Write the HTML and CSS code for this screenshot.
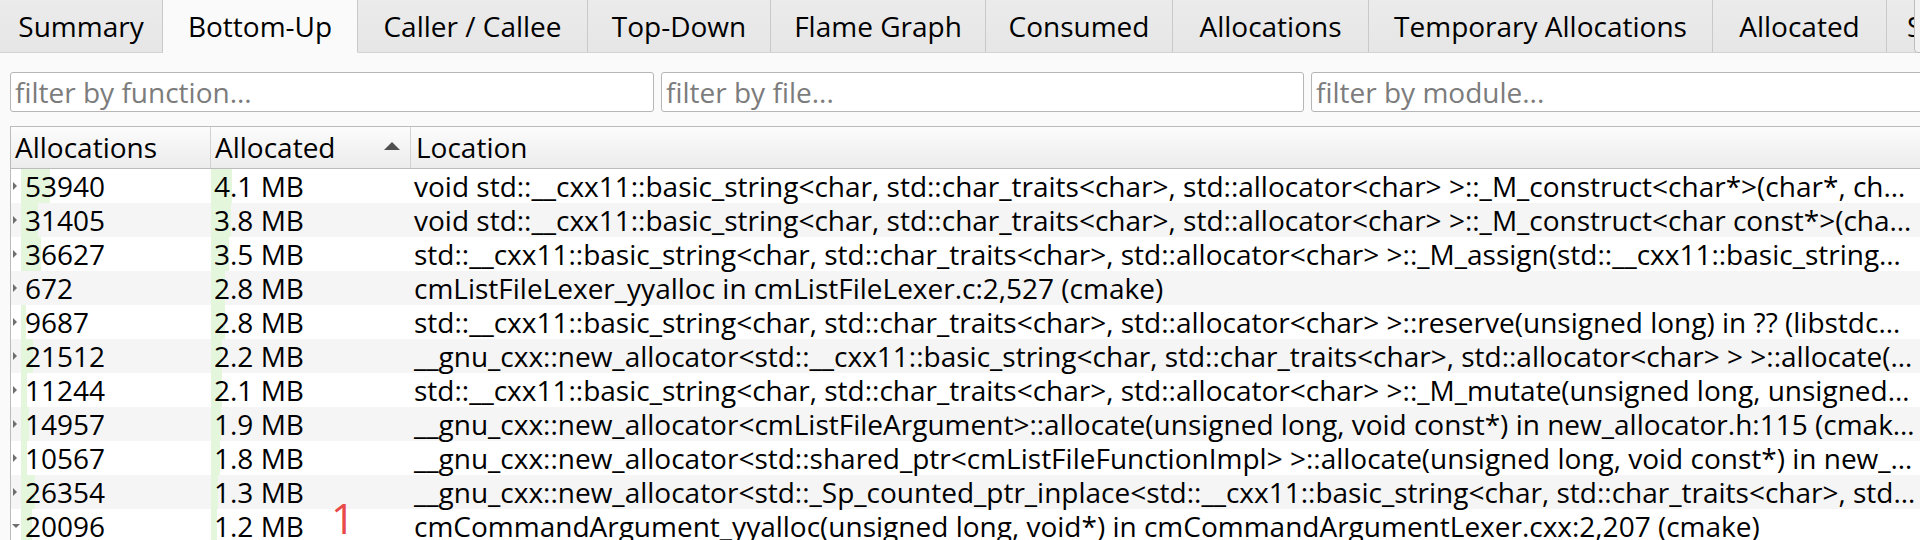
FILE: index.html
```html
<!DOCTYPE html>
<html lang="en">
<head>
<meta charset="utf-8">
<title>Heaptrack - Bottom-Up</title>
<link rel="stylesheet" href="styles.css">
</head>
<body>
<div class="tabbar">
  <div class="tab">Summary</div>
  <div class="tab active">Bottom-Up</div>
  <div class="tab">Caller / Callee</div>
  <div class="tab">Top-Down</div>
  <div class="tab">Flame Graph</div>
  <div class="tab">Consumed</div>
  <div class="tab">Allocations</div>
  <div class="tab">Temporary Allocations</div>
  <div class="tab">Allocated</div>
  <div class="tab">Sizes</div>
  <div class="tab-scroll"></div>
</div>

<div class="filters">
  <input class="filter" type="text" placeholder="filter by function...">
  <input class="filter" type="text" placeholder="filter by file...">
  <input class="filter" type="text" placeholder="filter by module...">
</div>

<div class="tree">
  <div class="header">
    <div class="hcell">Allocations</div>
    <div class="hcell sorted"><span>Allocated</span><span class="sort-up"></span></div>
    <div class="hcell last">Location</div>
  </div>

  <div class="row">
    <div class="branch"><span class="arrow"></span></div>
    <div class="cell bar" style="--w:29px">53940</div>
    <div class="cell bar" style="--w:21px">4.1 MB</div>
    <div class="cell loc">void std::__cxx11::basic_string&lt;char, std::char_traits&lt;char&gt;, std::allocator&lt;char&gt; &gt;::_M_construct&lt;char*&gt;(char*, char*, std::forward_iterator_tag) in basic_string.tcc:225 (cmake)</div>
  </div>
  <div class="row">
    <div class="branch"><span class="arrow"></span></div>
    <div class="cell bar" style="--w:17px">31405</div>
    <div class="cell bar" style="--w:20px">3.8 MB</div>
    <div class="cell loc">void std::__cxx11::basic_string&lt;char, std::char_traits&lt;char&gt;, std::allocator&lt;char&gt; &gt;::_M_construct&lt;char const*&gt;(char const*, char const*, std::forward_iterator_tag) in basic_string.tcc:225 (cmake)</div>
  </div>
  <div class="row">
    <div class="branch"><span class="arrow"></span></div>
    <div class="cell bar" style="--w:20px">36627</div>
    <div class="cell bar" style="--w:18px">3.5 MB</div>
    <div class="cell loc">std::__cxx11::basic_string&lt;char, std::char_traits&lt;char&gt;, std::allocator&lt;char&gt; &gt;::_M_assign(std::__cxx11::basic_string&lt;char, std::char_traits&lt;char&gt;, std::allocator&lt;char&gt; &gt; const&amp;) in ?? (libstdc++.so.6)</div>
  </div>
  <div class="row">
    <div class="branch"><span class="arrow"></span></div>
    <div class="cell bar" style="--w:0px">672</div>
    <div class="cell bar" style="--w:14px">2.8 MB</div>
    <div class="cell loc">cmListFileLexer_yyalloc in cmListFileLexer.c:2,527 (cmake)</div>
  </div>
  <div class="row">
    <div class="branch"><span class="arrow"></span></div>
    <div class="cell bar" style="--w:5px">9687</div>
    <div class="cell bar" style="--w:14px">2.8 MB</div>
    <div class="cell loc">std::__cxx11::basic_string&lt;char, std::char_traits&lt;char&gt;, std::allocator&lt;char&gt; &gt;::reserve(unsigned long) in ?? (libstdc++.so.6)</div>
  </div>
  <div class="row">
    <div class="branch"><span class="arrow"></span></div>
    <div class="cell bar" style="--w:12px">21512</div>
    <div class="cell bar" style="--w:11px">2.2 MB</div>
    <div class="cell loc">__gnu_cxx::new_allocator&lt;std::__cxx11::basic_string&lt;char, std::char_traits&lt;char&gt;, std::allocator&lt;char&gt; &gt; &gt;::allocate(unsigned long, void const*) in new_allocator.h:115 (cmake)</div>
  </div>
  <div class="row">
    <div class="branch"><span class="arrow"></span></div>
    <div class="cell bar" style="--w:6px">11244</div>
    <div class="cell bar" style="--w:11px">2.1 MB</div>
    <div class="cell loc">std::__cxx11::basic_string&lt;char, std::char_traits&lt;char&gt;, std::allocator&lt;char&gt; &gt;::_M_mutate(unsigned long, unsigned long, char const*, unsigned long) in ?? (libstdc++.so.6)</div>
  </div>
  <div class="row">
    <div class="branch"><span class="arrow"></span></div>
    <div class="cell bar" style="--w:8px">14957</div>
    <div class="cell bar" style="--w:10px">1.9 MB</div>
    <div class="cell loc">__gnu_cxx::new_allocator&lt;cmListFileArgument&gt;::allocate(unsigned long, void const*) in new_allocator.h:115 (cmake)</div>
  </div>
  <div class="row">
    <div class="branch"><span class="arrow"></span></div>
    <div class="cell bar" style="--w:6px">10567</div>
    <div class="cell bar" style="--w:9px">1.8 MB</div>
    <div class="cell loc">__gnu_cxx::new_allocator&lt;std::shared_ptr&lt;cmListFileFunctionImpl&gt; &gt;::allocate(unsigned long, void const*) in new_allocator.h:115 (cmake)</div>
  </div>
  <div class="row">
    <div class="branch"><span class="arrow"></span></div>
    <div class="cell bar" style="--w:14px">26354</div>
    <div class="cell bar" style="--w:7px">1.3 MB</div>
    <div class="cell loc">__gnu_cxx::new_allocator&lt;std::_Sp_counted_ptr_inplace&lt;std::__cxx11::basic_string&lt;char, std::char_traits&lt;char&gt;, std::allocator&lt;char&gt; &gt;, std::allocator&lt;void&gt; &gt; &gt;::allocate(unsigned long, void const*)</div>
  </div>
  <div class="row">
    <div class="branch"><span class="arrow open"></span></div>
    <div class="cell bar" style="--w:11px">20096</div>
    <div class="cell bar" style="--w:6px">1.2 MB</div>
    <div class="cell loc">cmCommandArgument_yyalloc(unsigned long, void*) in cmCommandArgumentLexer.cxx:2,207 (cmake)</div>
  </div>
</div>

<div class="marker">1</div>
</body>
</html>
```

FILE: styles.css
```css
* { box-sizing: border-box; }

html, body {
  margin: 0;
  width: 1920px;
  height: 540px;
  overflow: hidden;
}

body {
  position: relative;
  background: #fafafa;
  color: #000;
  font-family: "Open Sans", "Noto Sans", sans-serif;
  font-size: 28px;
}

/* ---------- tab bar ---------- */
.tabbar {
  position: relative;
  display: grid;
  grid-template-columns: 163px 195px 230px 183px 215px 187px 196px 344px 174px 120px;
  height: 53px;
  background: #e8e8e8;
  overflow: hidden;
}

.tab {
  height: 53px;
  line-height: 53px;
  text-align: center;
  white-space: nowrap;
  border-right: 1px solid #c9c9c9;
  border-bottom: 1px solid #d4d4d4;
  background: linear-gradient(#ebebeb, #e6e6e6);
}

.tab.active {
  background: #fafafa;
  border-bottom-color: #fafafa;
}

.tab:nth-child(10) {
  text-align: left;
  padding-left: 20px;
}

.tab-scroll {
  position: absolute;
  left: 1914px;
  top: -4px;
  width: 40px;
  height: 57px;
  background: #f2f2f2;
  border: 1px solid #bdbdbd;
  border-radius: 4px;
}

/* ---------- filters ---------- */
.filters {
  display: grid;
  grid-template-columns: 644px 643px 644px;
  column-gap: 7px;
  padding: 19px 0 0 10px;
}

.filter {
  height: 40px;
  margin: 0;
  padding: 0 4px;
  border: 1px solid #b6b6b6;
  border-radius: 3px;
  background: #fff;
  font-family: inherit;
  font-size: 28px;
  color: #000;
  outline: none;
}

.filter::placeholder {
  color: #7c7c7c;
}

/* ---------- tree view ---------- */
.tree {
  margin: 14px 0 0 10px;
  border-top: 1px solid #bcbcbc;
  border-left: 1px solid #bcbcbc;
  background: #fff;
}

.header {
  display: grid;
  grid-template-columns: 200px 200px 1fr;
  height: 42px;
  border-bottom: 1px solid #bcbcbc;
  background: linear-gradient(#fcfcfc, #ececec);
}

.hcell {
  height: 41px;
  line-height: 41px;
  padding-left: 4px;
  border-right: 1px solid #d2d2d2;
  white-space: nowrap;
}

.hcell.last {
  padding-left: 5px;
  border-right: none;
}

.hcell.sorted {
  display: flex;
  justify-content: space-between;
  align-items: center;
  padding-right: 10px;
}

.sort-up {
  width: 0;
  height: 0;
  border-left: 8px solid transparent;
  border-right: 8px solid transparent;
  border-bottom: 8px solid #4f4f4f;
  margin-bottom: 3px;
}

.row {
  display: grid;
  grid-template-columns: 10px 190px 200px 1fr;
  height: 34px;
  line-height: 34px;
  background: #fff;
}

.row:nth-child(odd) {
  background: #f5f5f5;
}

.branch {
  display: flex;
  align-items: center;
  justify-content: center;
}

.arrow {
  width: 0;
  height: 0;
  border-top: 4px solid transparent;
  border-bottom: 4px solid transparent;
  border-left: 4px solid #6f6f6f;
  margin-left: -2px;
}

.arrow.open {
  border-left: 4px solid transparent;
  border-right: 4px solid transparent;
  border-top: 4px solid #6f6f6f;
  border-bottom: none;
  margin-left: 0;
}

.cell {
  padding-left: 4px;
  white-space: nowrap;
}

.cell.bar {
  background-image: linear-gradient(#e4f6dc, #e4f6dc);
  background-repeat: no-repeat;
  background-size: var(--w) 100%;
}

.cell.bar + .cell.bar {
  padding-left: 3px;
}

.cell.loc {
  min-width: 0;
  padding: 0 4px 0 3px;
  overflow-x: clip;
  overflow-y: visible;
  text-overflow: ellipsis;
}

/* ---------- annotation ---------- */
.marker {
  position: absolute;
  left: 331px;
  top: 497px;
  font-size: 42px;
  line-height: 42px;
  color: #e84a4a;
}
```
